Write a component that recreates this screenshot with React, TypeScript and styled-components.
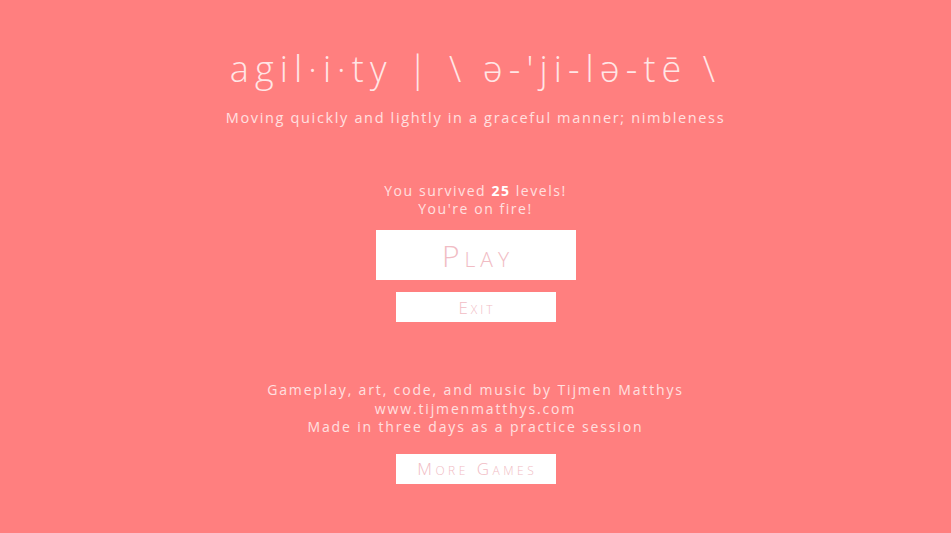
import React from "react";
import styled, { createGlobalStyle } from "styled-components";

const GlobalStyle = createGlobalStyle`
  html, body {
    margin: 0;
    padding: 0;
    background: #ff7f7f;
  }
  body {
    font-family: "Open Sans", "Lato", sans-serif;
  }
`;

const Screen = styled.div`
  width: 951px;
  height: 533px;
  background: #ff7f7f;
  display: flex;
  flex-direction: column;
  align-items: center;
  padding-top: 47px;
  box-sizing: border-box;
  color: #ffe0e0;
  overflow: hidden;
`;

const Title = styled.h1`
  margin: 0;
  font-size: 36px;
  font-weight: 300;
  line-height: 44px;
  letter-spacing: 6.1px;
  color: #ffe6e6;
  white-space: nowrap;
`;

const Subtitle = styled.div`
  margin-top: 18px;
  font-size: 14.5px;
  font-weight: 400;
  line-height: 18px;
  letter-spacing: 1.65px;
`;

const Status = styled.div`
  margin-top: 55px;
  font-size: 14px;
  line-height: 18px;
  letter-spacing: 1.55px;
  text-align: center;

  b {
    font-weight: 700;
    color: #ffffff;
  }
`;

interface MenuButtonProps {
  $big?: boolean;
  $spacing?: number;
}

const MenuButton = styled.button<MenuButtonProps>`
  display: block;
  border: none;
  background: #ffffff;
  color: #f1bcc4;
  font-family: "Open Sans", "Lato", sans-serif;
  font-weight: 300;
  font-variant: small-caps;
  cursor: pointer;
  padding: 0;
  width: ${({ $big }) => ($big ? "200px" : "160px")};
  height: ${({ $big }) => ($big ? "50px" : "30px")};
  font-size: ${({ $big }) => ($big ? "30px" : "17px")};
  letter-spacing: ${({ $spacing }) => $spacing ?? 3}px;
  text-indent: ${({ $spacing }) => $spacing ?? 3}px;
`;

const PlayButton = styled(MenuButton)`
  margin-top: 12px;
`;

const ExitButton = styled(MenuButton)`
  margin-top: 12px;
`;

const Credits = styled.div`
  margin-top: 59px;
  font-size: 14px;
  line-height: 18.5px;
  letter-spacing: 1.85px;
  text-align: center;
`;

const MoreButton = styled(MenuButton)`
  margin-top: 17px;
`;

export default function App() {
  return (
    <>
      <GlobalStyle />
      <Screen>
        <Title>agil·i·ty | \ ə-'ji-lə-tē \</Title>
        <Subtitle>
          Moving quickly and lightly in a graceful manner; nimbleness
        </Subtitle>
        <Status>
          You survived <b>25</b> levels!
          <br />
          You're on fire!
        </Status>
        <PlayButton $big $spacing={5}>
          Play
        </PlayButton>
        <ExitButton $spacing={3}>Exit</ExitButton>
        <Credits>
          Gameplay, art, code, and music by Tijmen Matthys
          <br />
          www.tijmenmatthys.com
          <br />
          Made in three days as a practice session
        </Credits>
        <MoreButton $spacing={3.5}>More Games</MoreButton>
      </Screen>
    </>
  );
}
